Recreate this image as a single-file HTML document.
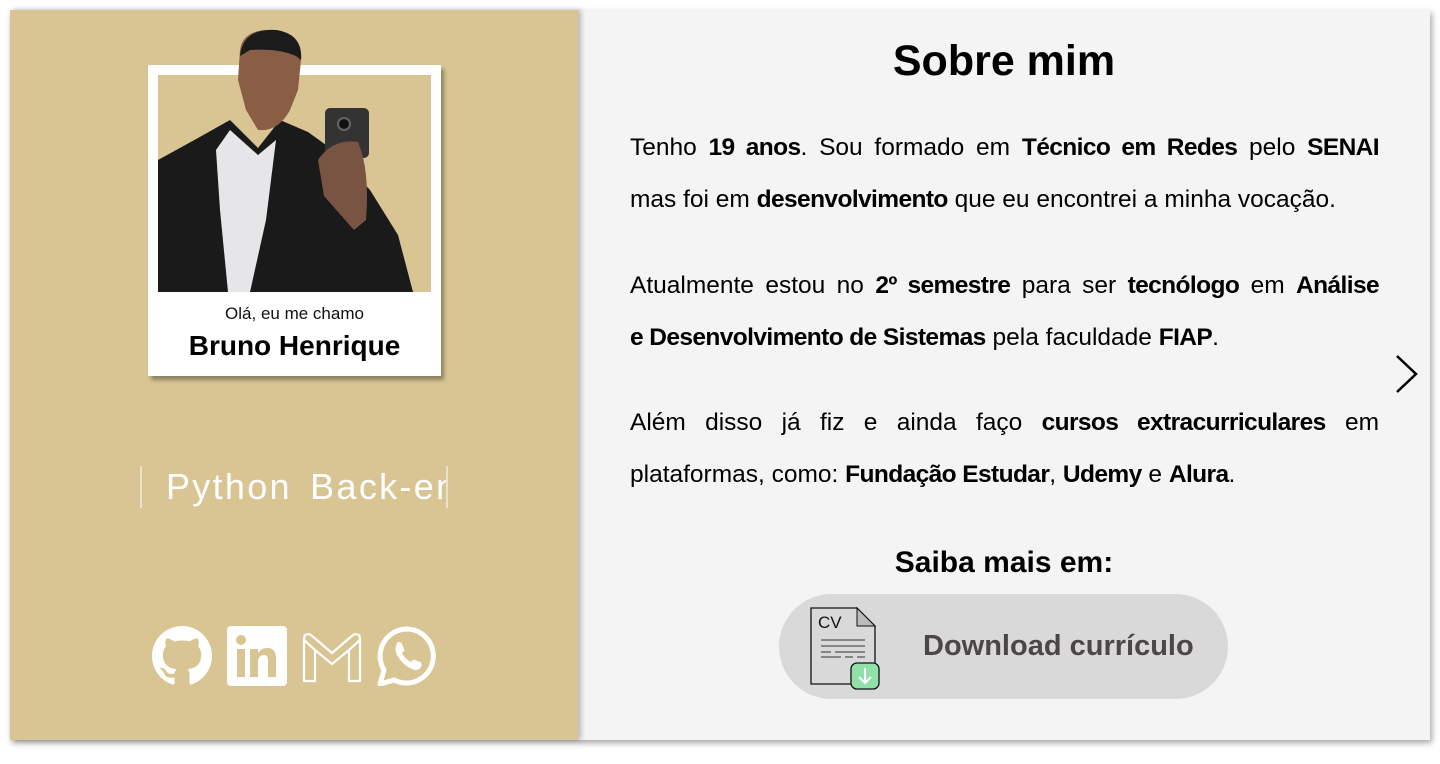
<!DOCTYPE html>
<html><head><meta charset="utf-8"><style>
*{margin:0;padding:0;box-sizing:border-box}
body{width:1440px;height:764px;background:#fff;font-family:"Liberation Sans",Arial,sans-serif;position:relative;overflow:hidden}
.card{position:absolute;left:10px;top:10px;width:1420px;height:730px;background:#f4f4f4;box-shadow:2px 3px 6px rgba(0,0,0,.35)}
.left{position:absolute;left:0;top:0;width:568px;height:730px;background:#d9c594;box-shadow:3px 0 5px rgba(0,0,0,.25)}
.frame{position:absolute;left:138px;top:55px;width:293px;height:311px;background:#fff;box-shadow:3px 4px 4px rgba(0,0,0,.35)}
.photo{position:absolute;left:148px;top:65px;width:273px;height:217px;background:#d9c594}
.hi{position:absolute;left:138px;top:294px;width:293px;text-align:center;font-size:17px;color:#111}
.name{position:absolute;left:138px;top:320px;width:293px;text-align:center;font-size:28px;font-weight:bold;color:#000}
.type{position:absolute;left:130px;top:456px;width:308px;height:42px;overflow:hidden;border-left:2px solid rgba(255,255,255,.5);border-right:2px solid rgba(255,255,255,.5)}
.type span{position:absolute;left:24px;top:0;white-space:nowrap;font-size:36px;color:#fff;letter-spacing:2.3px;word-spacing:6px;line-height:42px}
.icons{position:absolute;top:616px;left:142px}
.icons svg{position:absolute;top:0}
h1{position:absolute;left:568px;width:852px;top:27px;text-align:center;font-size:43px;font-weight:bold;color:#000}
.p{position:absolute;left:620px;width:749px;font-size:24.5px;color:#000;line-height:52px}
.p div{white-space:nowrap;text-align:justify;text-align-last:justify}
.p div.l{text-align-last:left}
b{font-weight:bold;letter-spacing:-0.6px}
h2{position:absolute;left:568px;width:852px;top:536px;text-align:center;font-size:30px;font-weight:bold;color:#000}
.btn{position:absolute;left:769px;top:584px;width:449px;height:105px;border-radius:53px;background:#d9d9d9}
.btn span{position:absolute;left:144px;top:36px;font-size:29px;font-weight:bold;color:#4d4646}
</style></head><body>
<div class="card">
<div class="left">
 <div class="frame"></div>
 <div class="photo"></div>
 <svg style="position:absolute;left:148px;top:10px" width="273" height="272" viewBox="0 0 273 272">
  <path d="M0 140 L40 118 L72 100 L100 128 L122 100 L150 112 L175 130 L212 170 L240 215 L255 272 L0 272Z" fill="#1a1a1a"/>
  <path d="M58 130 L72 110 L100 135 L118 120 L108 200 L92 272 L70 272 L62 190Z" fill="#e6e6e8"/>
  <path d="M82 30 Q85 8 118 10 Q145 14 143 40 L140 70 L132 90 Q120 112 100 110 L88 90 L80 60Z" fill="#8a5e45"/>
  <path d="M82 36 Q85 8 118 10 Q145 14 143 40 L138 36 Q120 28 92 30Z" fill="#1b1b1b"/>
  <rect x="167" y="88" width="44" height="50" rx="5" fill="#333"/>
  <circle cx="186" cy="104" r="6" fill="#111" stroke="#666" stroke-width="2"/>
  <path d="M160 140 Q175 118 200 122 Q212 150 208 200 L196 210 L166 176Z" fill="#7a5442"/>
 </svg>
 <div class="hi">Olá, eu me chamo</div>
 <div class="name">Bruno Henrique</div>
 <div class="type"><span>Python Back-end</span></div>
 <div class="icons">
  <svg style="left:0" width="60" height="60" viewBox="0 0 16 16"><path fill="#fff" d="M8 0C3.58 0 0 3.58 0 8c0 3.54 2.29 6.53 5.47 7.59.4.07.55-.17.55-.38 0-.19-.01-.82-.01-1.49-2.01.37-2.53-.49-2.69-.94-.09-.23-.48-.94-.82-1.13-.28-.15-.68-.52-.01-.53.63-.01 1.08.58 1.23.82.72 1.21 1.87.87 2.33.66.07-.52.28-.87.51-1.07-1.78-.2-3.64-.89-3.64-3.95 0-.87.31-1.59.82-2.15-.08-.2-.36-1.02.08-2.12 0 0 .67-.21 2.2.82.64-.18 1.32-.27 2-.27.68 0 1.36.09 2 .27 1.53-1.04 2.2-.82 2.2-.82.44 1.1.16 1.92.08 2.12.51.56.82 1.27.82 2.15 0 3.07-1.87 3.75-3.65 3.95.29.25.54.73.54 1.48 0 1.07-.01 1.93-.01 2.2 0 .21.15.46.55.38A8.013 8.013 0 0016 8c0-4.42-3.58-8-8-8z"/></svg>
  <svg style="left:75px" width="60" height="60" viewBox="0 0 60 60"><rect width="60" height="60" rx="4" fill="#fff"/><rect x="10" y="23" width="8" height="28" fill="#d9c594"/><circle cx="14" cy="14" r="5" fill="#d9c594"/><path d="M23 23h8v4c2-3 5-5 9-5 7 0 9 4 9 11v18h-8V35c0-4-1-6-4-6s-6 2-6 7v15h-8z" fill="#d9c594"/></svg>
  <svg style="left:150px" width="60" height="60" viewBox="0 0 60 60"><path d="M2 55V14Q2 6 9 9L30 27L51 9Q58 6 58 14V55H47V24L30 38L13 24V55Z M2 14L13 24 M58 14L47 24" fill="none" stroke="#fff" stroke-width="2.2" stroke-linejoin="round"/></svg>
  <svg style="left:225px" width="60" height="60" viewBox="0 0 60 60"><path d="M30 3A27 27 0 0 0 7 44L3 58L17 54A27 27 0 1 0 30 3Z" fill="none" stroke="#fff" stroke-width="5" stroke-linejoin="round"/><path d="M20 17c2-2 4-1 5 1l2 5c1 2-1 3-2 4 2 4 5 7 9 9 1-1 2-3 4-2l5 2c2 1 2 3 1 5-2 3-5 4-9 2-7-3-13-9-16-16-1-4 0-7 1-10z" fill="#fff"/></svg>
 </div>
</div>
<h1>Sobre mim</h1>
<div class="p" style="top:112px">
 <div>Tenho <b>19 anos</b>. Sou formado em <b>Técnico em Redes</b> pelo <b>SENAI</b></div>
 <div class="l">mas foi em <b>desenvolvimento</b> que eu encontrei a minha vocação.</div>
</div>
<div class="p" style="top:250px">
 <div>Atualmente estou no <b>2º semestre</b> para ser <b>tecnólogo</b> em <b>Análise</b></div>
 <div class="l"><b>e Desenvolvimento de Sistemas</b> pela faculdade <b>FIAP</b>.</div>
</div>
<div class="p" style="top:387px">
 <div>Além disso já fiz e ainda faço <b>cursos extracurriculares</b> em</div>
 <div class="l">plataformas, como: <b>Fundação Estudar</b>, <b>Udemy</b> e <b>Alura</b>.</div>
</div>
<svg style="position:absolute;left:1384px;top:344px" width="26" height="40" viewBox="0 0 26 40"><path d="M3 2L22 20L3 38" fill="none" stroke="#000" stroke-width="2.5"/></svg>
<h2>Saiba mais em:</h2>
<div class="btn">
 <svg style="position:absolute;left:30px;top:12px" width="75" height="85" viewBox="0 0 75 85">
  <path d="M2 2H48L66 20V78H2Z" fill="none" stroke="#111" stroke-width="1.3"/>
  <path d="M48 2V20H66Z" fill="#bbb" stroke="#111" stroke-width="1"/>
  <text x="9" y="22" font-family="Liberation Sans,sans-serif" font-size="17" fill="#111">CV</text>
  <path d="M12 34H56M12 40H56M12 46H22M26 46H56M12 51H32M36 51H44M48 51H56" stroke="#333" stroke-width="1"/>
  <rect x="42" y="57" width="28" height="26" rx="6" fill="#90e0a8" stroke="#111" stroke-width="1.3"/>
  <path d="M56 62V77M50 71L56 77L62 71" fill="none" stroke="#fff" stroke-width="2"/>
 </svg>
 <span>Download currículo</span>
</div>
</div>
</body></html>
